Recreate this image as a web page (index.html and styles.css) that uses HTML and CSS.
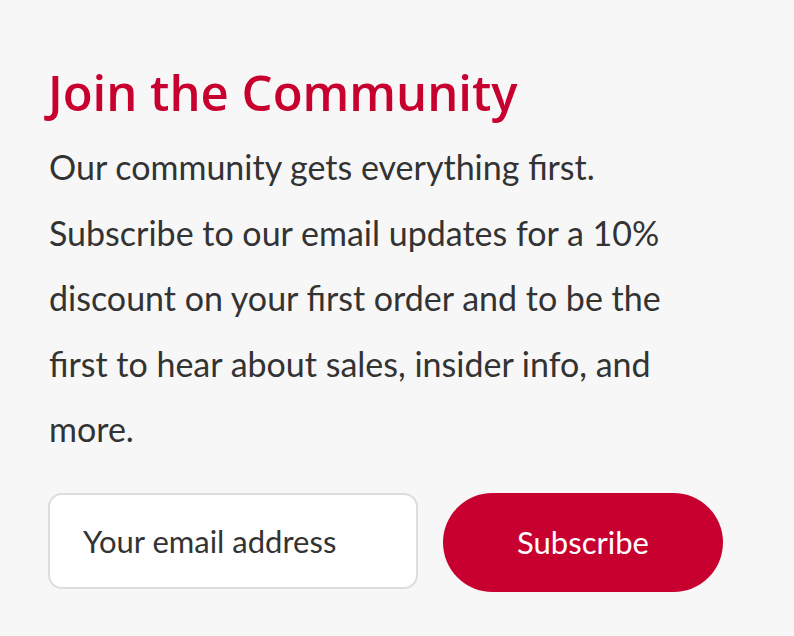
FILE: index.html
```html
<!DOCTYPE html>
<html lang="en">
<head>
<meta charset="utf-8">
<title>Join the Community</title>
<link rel="stylesheet" href="styles.css">
</head>
<body>
<section class="community">
  <h2 class="title">Join the Community</h2>
  <p class="lead">Our community gets everything first. Subscribe to our email updates for a 10% discount on your first order and to be the first to hear about sales, insider info, and more.</p>
  <form class="signup">
    <input class="email" type="email" placeholder="Your email address">
    <button class="btn" type="button">Subscribe</button>
  </form>
</section>
</body>
</html>
```
FILE: styles.css
```css
html, body {
  margin: 0;
  padding: 0;
  background: #f7f7f7;
}
.community {
  padding: 62px 48px 0 48px;
  width: 650px;
}
.title {
  margin: 0;
  font-family: "Open Sans", sans-serif;
  font-weight: 600;
  font-size: 49px;
  line-height: 60px;
  color: #c8002f;
}
.lead {
  margin: 12px 0 0 1px;
  font-family: Lato, sans-serif;
  font-size: 34px;
  line-height: 65.5px;
  color: #333;
}
.signup {
  display: flex;
  gap: 25px;
  margin-top: 31px;
}
.email {
  box-sizing: border-box;
  flex: none;
  width: 370px;
  min-width: 0;
  height: 96px;
  margin: 0;
  border: 2px solid #dddddd;
  border-radius: 14px;
  background: #fff;
  padding: 0 0 0 33px;
  font-family: Lato, sans-serif;
  font-size: 31px;
  color: #333;
}
.email::placeholder {
  color: #333;
  opacity: 1;
}
.btn {
  flex: none;
  width: 280px;
  height: 99px;
  margin: 0;
  border: none;
  border-radius: 50px;
  background: #c8002f;
  color: #fff;
  font-family: Lato, sans-serif;
  font-size: 31px;
}
```
